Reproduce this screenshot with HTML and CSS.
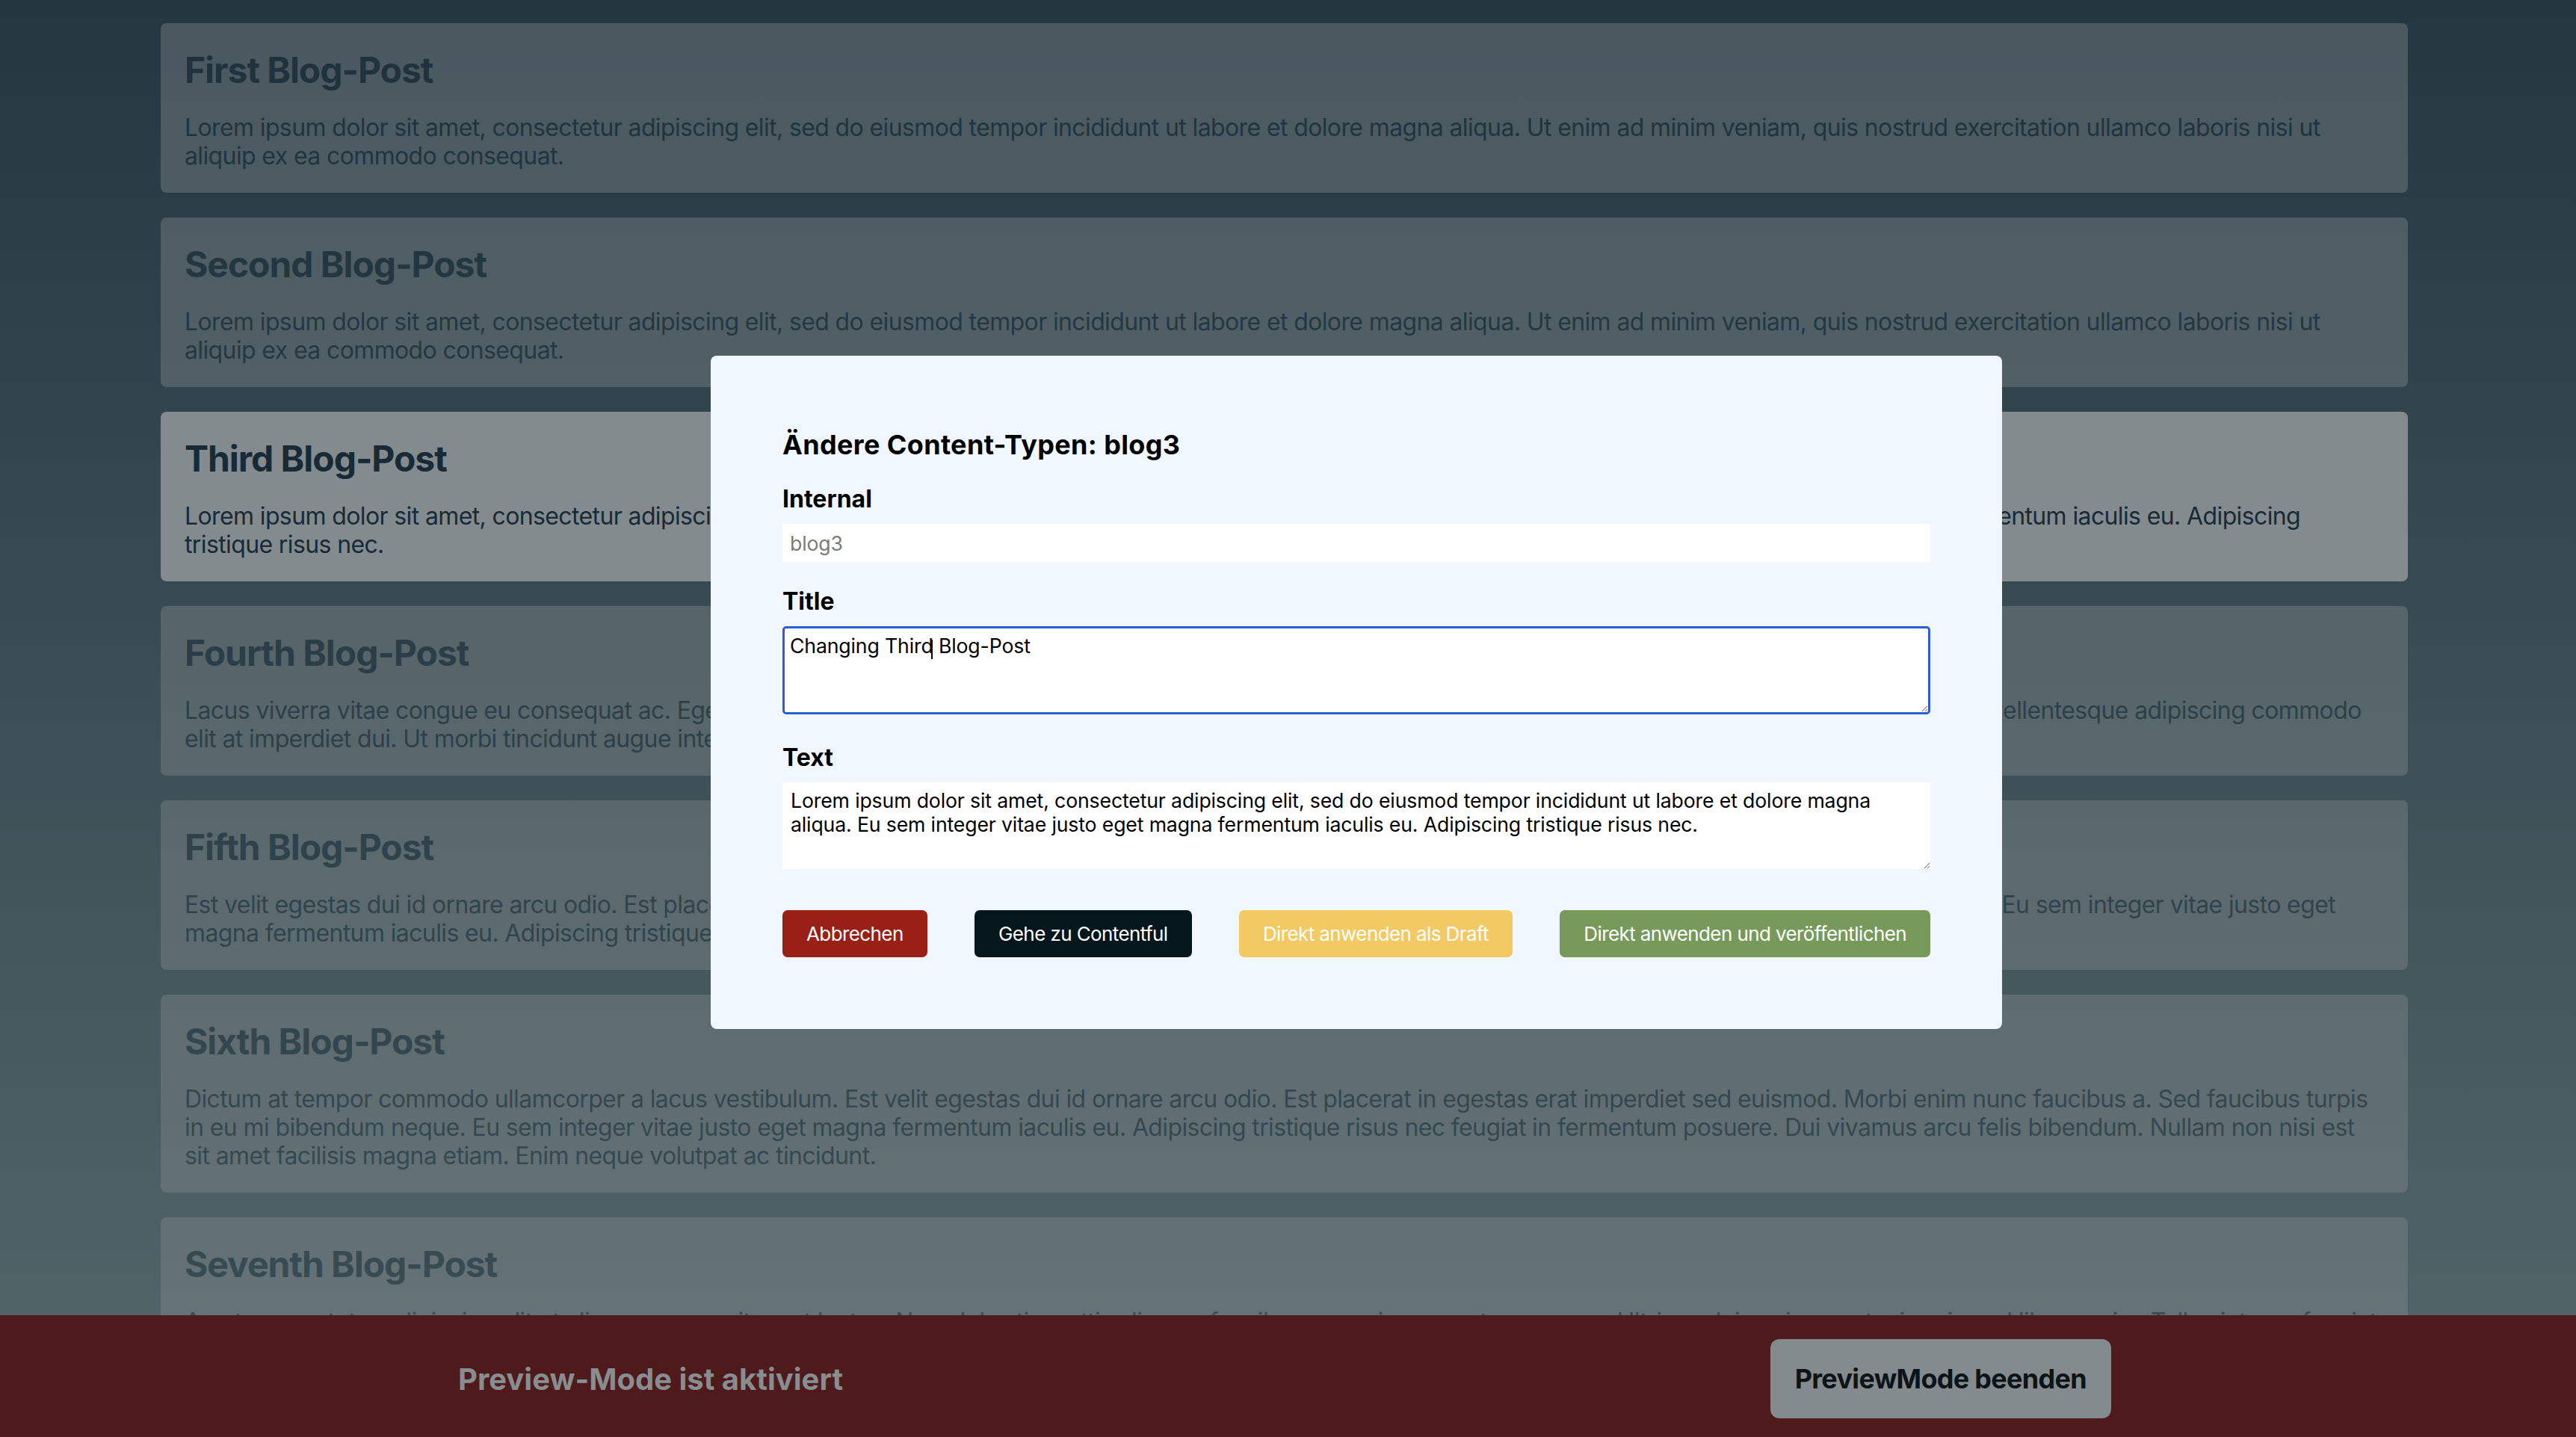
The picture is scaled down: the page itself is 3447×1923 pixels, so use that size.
FILE: index.html
```html
<!DOCTYPE html>
<html lang="de">
<head>
<meta charset="utf-8">
<title>Preview</title>
<link rel="stylesheet" href="styles.css">
</head>
<body>
<div class="page">
  <article class="card">
    <h2>First Blog-Post</h2>
    <p>Lorem ipsum dolor sit amet, consectetur adipiscing elit, sed do eiusmod tempor incididunt ut labore et dolore magna aliqua. Ut enim ad minim veniam, quis nostrud exercitation ullamco laboris nisi ut aliquip ex ea commodo consequat.</p>
  </article>
  <article class="card">
    <h2>Second Blog-Post</h2>
    <p>Lorem ipsum dolor sit amet, consectetur adipiscing elit, sed do eiusmod tempor incididunt ut labore et dolore magna aliqua. Ut enim ad minim veniam, quis nostrud exercitation ullamco laboris nisi ut aliquip ex ea commodo consequat.</p>
  </article>
  <article class="card active">
    <h2>Third Blog-Post</h2>
    <p>Lorem ipsum dolor sit amet, consectetur adipiscing elit, sed do eiusmod tempor incididunt ut labore et dolore magna aliqua. Eu sem integer vitae justo eget magna fermentum iaculis eu. Adipiscing tristique risus nec.</p>
  </article>
  <article class="card">
    <h2>Fourth Blog-Post</h2>
    <p>Lacus viverra vitae congue eu consequat ac. Egestas purus viverra accumsan in nisl nisi scelerisque eu ultrices vitae auctor eu augue ut lectus arcu bibendum varius. Pellentesque adipiscing commodo elit at imperdiet dui. Ut morbi tincidunt augue interdum velit euismod in pellentesque massa.</p>
  </article>
  <article class="card">
    <h2>Fifth Blog-Post</h2>
    <p>Est velit egestas dui id ornare arcu odio. Est placerat in egestas erat imperdiet sed euismod. Morbi enim nunc faucibus a. Sed faucibus turpis in eu mi bibendum neque. Eu sem integer vitae justo eget magna fermentum iaculis eu. Adipiscing tristique risus nec.</p>
  </article>
  <article class="card">
    <h2>Sixth Blog-Post</h2>
    <p>Dictum at tempor commodo ullamcorper a lacus vestibulum. Est velit egestas dui id ornare arcu odio. Est placerat in egestas erat imperdiet sed euismod. Morbi enim nunc faucibus a. Sed faucibus turpis in eu mi bibendum neque. Eu sem integer vitae justo eget magna fermentum iaculis eu. Adipiscing tristique risus nec feugiat in fermentum posuere. Dui vivamus arcu felis bibendum. Nullam non nisi est sit amet facilisis magna etiam. Enim neque volutpat ac tincidunt.</p>
  </article>
  <article class="card">
    <h2>Seventh Blog-Post</h2>
    <p>Amet consectetur adipiscing elit ut aliquam purus sit amet luctus. Nunc lobortis mattis aliquam faucibus purus in massa tempor nec. Ultrices dui sapien eget mi proin sed libero enim. Tellus integer feugiat scelerisque varius morbi enim nunc faucibus a pellentesque sit amet porttitor.</p>
  </article>
</div>

<div class="modal">
  <h3 class="modal-title">Ändere Content-Typen: blog3</h3>
  <label class="field-label first">Internal</label>
  <input class="field-input" type="text" value="blog3" readonly>
  <label class="field-label">Title</label>
  <textarea class="field-area title-area" id="title">Changing Third Blog-Post</textarea>
  <label class="field-label text-label">Text</label>
  <textarea class="field-area text-area">Lorem ipsum dolor sit amet, consectetur adipiscing elit, sed do eiusmod tempor incididunt ut labore et dolore magna aliqua. Eu sem integer vitae justo eget magna fermentum iaculis eu. Adipiscing tristique risus nec.</textarea>
  <div class="actions">
    <button class="btn btn-cancel">Abbrechen</button>
    <button class="btn btn-dark">Gehe zu Contentful</button>
    <button class="btn btn-draft">Direkt anwenden als Draft</button>
    <button class="btn btn-publish">Direkt anwenden und veröffentlichen</button>
  </div>
  <span class="caret"></span>
</div>

<div class="preview-bar">
  <span class="preview-text">Preview-Mode ist aktiviert</span>
  <button class="preview-btn">PreviewMode beenden</button>
</div>
<script src="script.js"></script>
</body>
</html>
```

FILE: styles.css
```css
* { box-sizing: border-box; }

html, body {
  margin: 0;
  height: 100%;
}

body {
  font-family: Inter, "Noto Sans", sans-serif;
  overflow: hidden;
}

.page {
  height: 100vh;
  overflow: hidden;
  background: linear-gradient(#233741, #55676b);
  padding: 31px 225px 0 215px;
  display: flex;
  flex-direction: column;
  gap: 33px;
}

.card {
  flex-shrink: 0;
  background: #838b8e;
  color: #172a35;
  border-radius: 8px;
  padding: 34px 32px 30px;
  opacity: 0.4;
}

.card.active { opacity: 1; }

.card h2 {
  margin: 0 0 30px;
  font-size: 48px;
  line-height: 57px;
  font-weight: 700;
  letter-spacing: -0.022em;
}

.card p {
  margin: 0;
  font-size: 32px;
  line-height: 38px;
  letter-spacing: -0.62px;
}

/* modal */
.modal {
  position: absolute;
  left: 951px;
  top: 476px;
  width: 1728px;
  padding: 98px 96px 96px;
  background: #f0f7fe;
  border-radius: 8px;
  display: flex;
  flex-direction: column;
  color: #000;
}

.modal-title {
  margin: 0;
  font-size: 36px;
  line-height: 43px;
  font-weight: 700;
  letter-spacing: 0.01em;
}

.field-label {
  display: block;
  margin-top: 34px;
  font-size: 32px;
  line-height: 38px;
  font-weight: 700;
}

.field-label.first { margin-top: 32px; }
.field-label.text-label { margin-top: 39px; }

.field-input,
.field-area {
  display: block;
  width: 100%;
  margin-top: 14px;
  font-family: Inter, "Noto Sans", sans-serif;
  font-size: 26.67px;
  line-height: 32px;
  letter-spacing: -0.15px;
  background: #fff;
  color: #000;
}

.field-input {
  height: 51px;
  border: none;
  padding: 0 10px;
  color: #7b7b7b;
  outline: none;
}

.field-area {
  resize: vertical;
  outline: none;
}

.title-area {
  height: 118px;
  border: 3px solid #2c5fcb;
  border-radius: 5px;
  padding: 7px 7px;
}

.text-area {
  height: 116px;
  border: none;
  padding: 8px 11px;
}

.caret {
  position: absolute;
  left: 295px;
  top: 380px;
  width: 2px;
  height: 26px;
  background: #000;
}

.actions {
  display: flex;
  justify-content: space-between;
  margin-top: 55px;
}

.btn {
  height: 63px;
  padding: 0 32px;
  border: none;
  border-radius: 7px;
  color: #fff;
  font-family: Inter, "Noto Sans", sans-serif;
  font-size: 26px;
  letter-spacing: -0.6px;
}

.btn-cancel { background: #991f17; }
.btn-dark { background: #05161c; }
.btn-draft { background: #f2c963; }
.btn-publish { background: #77995a; }

/* preview bar */
.preview-bar {
  position: fixed;
  left: 0;
  right: 0;
  bottom: 0;
  height: 163px;
  background: #4f1a1b;
  display: flex;
  align-items: center;
  justify-content: space-between;
  padding: 7px 622px 0 613px;
}

.preview-text {
  font-size: 40px;
  font-weight: 700;
  color: #878d90;
}

.preview-btn {
  height: 106px;
  padding: 0 33px;
  border: none;
  border-radius: 12px;
  background: #838b8e;
  color: #0d1418;
  font-family: Inter, "Noto Sans", sans-serif;
  font-size: 36px;
  font-weight: 700;
  letter-spacing: -0.7px;
}
```

FILE: script.js
```js
var t = document.getElementById('title');
t.focus();
t.setSelectionRange(14, 14);
```
